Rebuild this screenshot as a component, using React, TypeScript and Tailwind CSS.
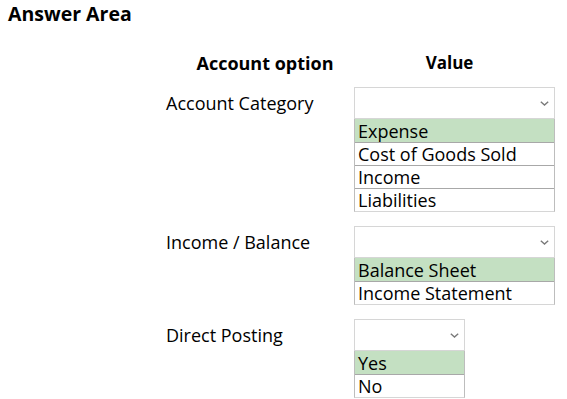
import React from "react";

type Row = { label: string; options: string[]; width: string };

const rows: Row[] = [
  { label: "Account Category", options: ["Expense", "Cost of Goods Sold", "Income", "Liabilities"], width: "w-[201px]" },
  { label: "Income / Balance", options: ["Balance Sheet", "Income Statement"], width: "w-[201px]" },
  { label: "Direct Posting", options: ["Yes", "No"], width: "w-[111px]" },
];

const Chevron = () => (
  <svg width="9" height="5" viewBox="0 0 9 5" fill="none" className="mr-[5px]">
    <path d="M0.8 0.8 L4.5 4 L8.2 0.8" stroke="#7a7a7a" strokeWidth="1.4" />
  </svg>
);

const Dropdown = ({ options, width }: { options: string[]; width: string }) => (
  <div className={`${width} flex flex-col`}>
    <div className="h-[32px] border border-[#d6d6d6] bg-white flex items-center justify-end">
      <Chevron />
    </div>
    <div className="border-x border-b border-[#bdbdbd] border-b-[#d6d6d6]">
      {options.map((o, i) => (
        <div
          key={o}
          className={`h-[23px] pl-[3px] flex items-center text-[18px] leading-none text-black ${
            i === 0 ? "bg-[#c4e0c2]" : "bg-white"
          } ${i > 0 ? "border-t border-[#a8a8a8]" : ""}`}
        >
          {o}
        </div>
      ))}
    </div>
  </div>
);

const App = () => {
  return (
    <div
      className="w-[567px] h-[399px] bg-white text-black overflow-hidden"
      style={{ fontFamily: "'Open Sans', 'Noto Sans', sans-serif" }}
    >
      <div className="pl-[8px] h-[28px] text-[19.5px] leading-[28px] font-bold">Answer Area</div>
      <div className="ml-[166px] mt-[23px] h-[24px] grid grid-cols-[188px_201px] items-center text-[18px] leading-[24px] font-bold">
        <div className="text-center pl-[10px]">Account option</div>
        <div className="text-center pr-[10px] text-[17px]">Value</div>
      </div>
      <div className="ml-[166px] mt-[12px] flex flex-col gap-[14px]">
        {rows.map((r) => (
          <div key={r.label} className="flex items-start">
            <div className="w-[188px] h-[32px] flex items-center text-[18px] leading-[24px]">{r.label}</div>
            <Dropdown options={r.options} width={r.width} />
          </div>
        ))}
      </div>
    </div>
  );
};

export default App;
